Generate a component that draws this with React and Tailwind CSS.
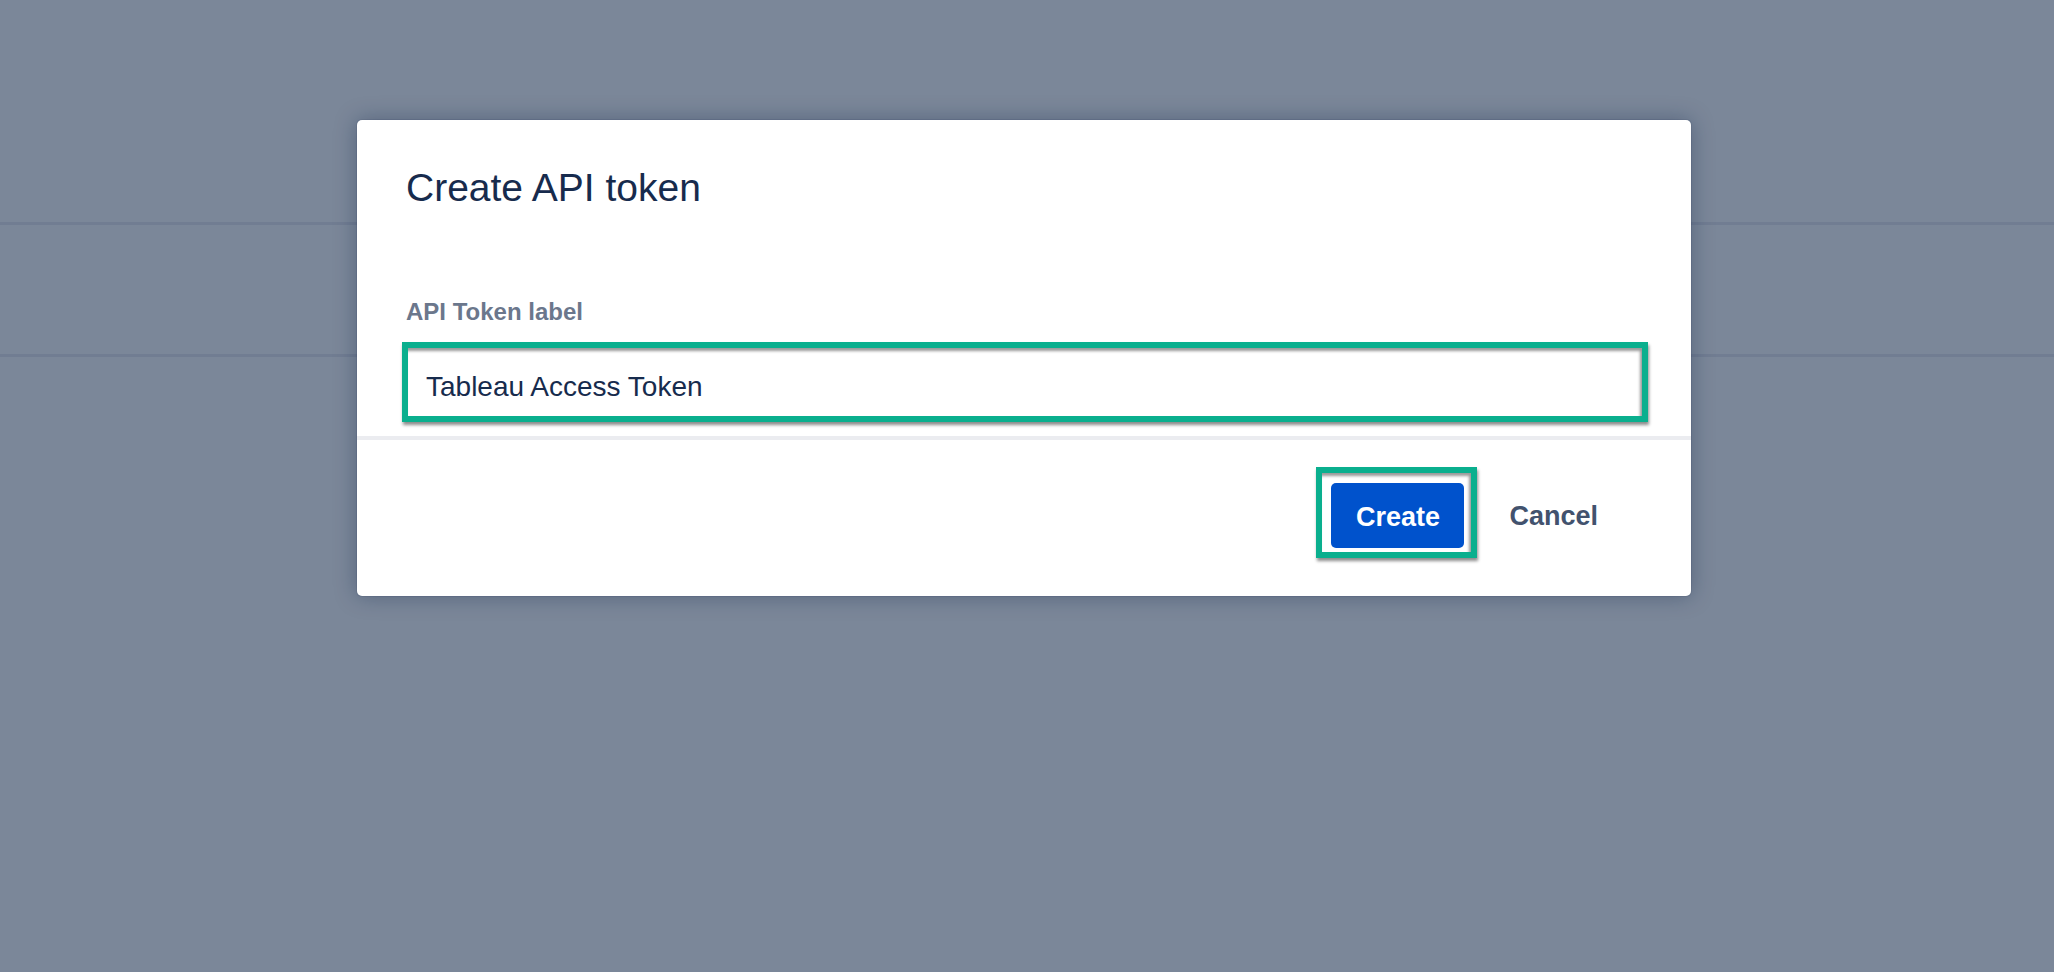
import React, { useState } from 'react';

const font = { fontFamily: '"Liberation Sans", Arial, Helvetica, sans-serif' };

const CreateTokenModal = () => {
  const [label, setLabel] = useState('Tableau Access Token');

  return (
    <div className="absolute left-[357px] top-[120px] w-[1334px] bg-white rounded-[5px] shadow-[0_0_0_1px_rgba(9,30,66,0.08),0_0_22px_rgba(9,30,66,0.35)]">
      <div className="pl-[49px] pr-[49px] pt-[44px] pb-[14px]">
        <h1 className="text-[39px] leading-[47px] font-normal text-[#172b4d]">Create API token</h1>
        <label htmlFor="token-label" className="block mt-[87px] text-[24px] leading-[28px] font-bold text-[#6b778c]">
          API Token label
        </label>
        <div className="mt-[16px] ml-[-4px] mr-[-6px] border-[6px] border-[#0aaf8e] shadow-[1px_3px_3px_rgba(0,0,0,0.45),inset_-2px_3px_3px_rgba(0,0,0,0.4)]">
          <input
            id="token-label"
            type="text"
            value={label}
            onChange={(e) => setLabel(e.target.value)}
            style={font}
            className="block w-full h-[68px] pl-[18px] pt-[9px] bg-transparent outline-none text-[28px] text-[#172b4d]"
          />
        </div>
      </div>
      <div className="h-[4px] bg-[#ebecf0]" />
      <div className="flex justify-end items-center pt-[27px] pb-[38px] pr-[77px] gap-[16px]">
        <div className="border-[6px] border-[#0aaf8e] pl-[9px] pr-[7px] pt-[10px] pb-[4px] shadow-[1px_3px_3px_rgba(0,0,0,0.45),inset_-2px_3px_3px_rgba(0,0,0,0.4)]">
          <button className="w-[133px] h-[65px] pt-[3px] rounded-[5px] bg-[#0052cc] text-white text-[27px] font-bold">
            Create
          </button>
        </div>
        <button className="mt-[8px] px-[16px] h-[65px] text-[27px] font-bold text-[#42526e]">Cancel</button>
      </div>
    </div>
  );
};

export default function App() {
  return (
    <div style={font} className="relative w-full h-[972px] overflow-hidden bg-[#7b8799]">
      {/* page underneath the blanket */}
      <div className="h-[222px]" />
      <div className="h-[3px] bg-[#717d92]" />
      <div className="h-[129px]" />
      <div className="h-[3px] bg-[#717d92]" />
      <CreateTokenModal />
    </div>
  );
}
